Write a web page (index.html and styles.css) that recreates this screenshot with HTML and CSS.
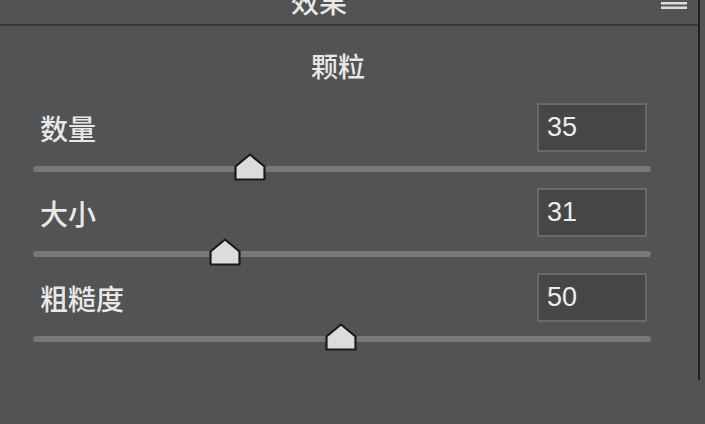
FILE: index.html
```html
<!DOCTYPE html>
<html lang="zh-CN">

<head>
  <meta charset="UTF-8" />
  <title>效果</title>
  <link rel="stylesheet" href="styles.css">
</head>

<body>
  <div class="panel">
    <div class="panel-header">
      <span class="panel-title">效果</span>
      <svg class="panel-menu" width="28" height="12" viewBox="0 0 28 12">
        <rect x="1" y="-3" width="26" height="2.5" fill="#dedede" />
        <rect x="1" y="2" width="26" height="2.5" fill="#dedede" />
        <rect x="1" y="6.5" width="26" height="2.5" fill="#dedede" />
      </svg>
    </div>

    <div class="section">
      <div class="section-title">颗粒</div>

      <div class="field">
        <div class="field-head">
          <span class="field-label">数量</span>
          <div class="field-value">35</div>
        </div>
        <div class="slider">
          <div class="slider-track"></div>
          <svg class="slider-thumb" style="left: 35.1%" width="32" height="28" viewBox="0 0 32 28">
            <path d="M16 1.5 L30.5 13.5 L30.5 26.5 L1.5 26.5 L1.5 13.5 Z" fill="#dcdcdc" stroke="#1a1a1a" stroke-width="2.2" stroke-linejoin="round" />
          </svg>
        </div>
      </div>

      <div class="field">
        <div class="field-head">
          <span class="field-label">大小</span>
          <div class="field-value">31</div>
        </div>
        <div class="slider">
          <div class="slider-track"></div>
          <svg class="slider-thumb" style="left: 31.1%" width="32" height="28" viewBox="0 0 32 28">
            <path d="M16 1.5 L30.5 13.5 L30.5 26.5 L1.5 26.5 L1.5 13.5 Z" fill="#dcdcdc" stroke="#1a1a1a" stroke-width="2.2" stroke-linejoin="round" />
          </svg>
        </div>
      </div>

      <div class="field">
        <div class="field-head">
          <span class="field-label">粗糙度</span>
          <div class="field-value">50</div>
        </div>
        <div class="slider">
          <div class="slider-track"></div>
          <svg class="slider-thumb" style="left: 49.8%" width="32" height="28" viewBox="0 0 32 28">
            <path d="M16 1.5 L30.5 13.5 L30.5 26.5 L1.5 26.5 L1.5 13.5 Z" fill="#dcdcdc" stroke="#1a1a1a" stroke-width="2.2" stroke-linejoin="round" />
          </svg>
        </div>
      </div>
    </div>
  </div>
</body>

</html>
```

FILE: styles.css
```css
* {
  box-sizing: border-box;
}

html,
body {
  margin: 0;
  padding: 0;
  background: #535353;
  color: #e8e8e8;
  font-family: "Noto Sans CJK SC", "Noto Sans", sans-serif;
  font-weight: 500;
}

body {
  width: 705px;
  height: 424px;
  overflow: hidden;
}

.panel {
  width: 700px;
  height: 380px;
  border-right: 2px solid #1f1f1f;
}

.panel-header {
  display: flex;
  align-items: flex-end;
  justify-content: space-between;
  height: 26px;
  border-bottom: 2px solid #383838;
  padding: 0 10px 0 291px;
}

.panel-title {
  font-size: 28px;
  line-height: 30px;
  padding-bottom: 8px;
}

.panel-menu {
  align-self: flex-start;
  display: block;
}

.section {
  padding: 0 47px 0 33px;
}

.section-title {
  text-align: center;
  font-size: 27px;
  line-height: 36px;
  padding: 22px 8px 0 0;
  margin-bottom: 19px;
}

.field {
  margin-bottom: 6px;
}

.field-head {
  display: flex;
  align-items: center;
  justify-content: space-between;
  padding: 0 4px 0 7px;
}

.field-label {
  font-size: 28px;
  line-height: 36px;
}

.field-value {
  width: 110px;
  height: 49px;
  background: #464646;
  border: 2px solid #696969;
  padding-left: 8px;
  font-family: "Liberation Sans", Arial, sans-serif;
  font-weight: 400;
  font-size: 27px;
  line-height: 45px;
  color: #ececec;
}

.slider {
  position: relative;
  height: 30px;
  padding-top: 14px;
}

.slider-track {
  height: 6px;
  border-radius: 3px;
  background: #787878;
}

.slider-thumb {
  position: absolute;
  top: 1px;
  margin-left: -16px;
  display: block;
}
```
